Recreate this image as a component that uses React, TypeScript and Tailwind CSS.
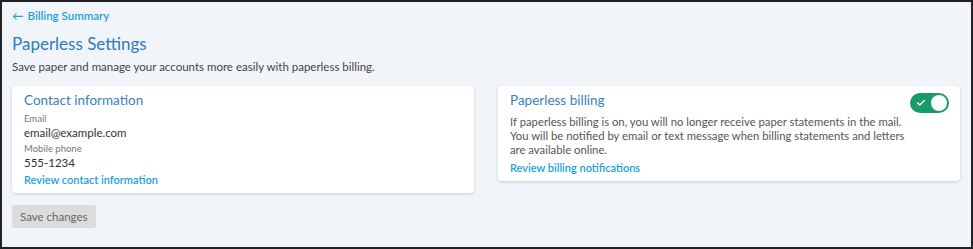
import { Check } from "lucide-react";

export default function App(): React.ReactElement {
  return (
    <div
      className="w-[973px] h-[249px] border-2 border-[#222] bg-[#f1f5f9] px-[10px] pt-[6px] overflow-hidden"
      style={{ fontFamily: '"Lato", "Open Sans", sans-serif' }}
    >
      <a className="flex items-center gap-1 text-[11.5px] text-[#1ba1dc] font-semibold leading-[16px]">
        <span>←</span> Billing Summary
      </a>
      <h1 className="mt-[9px] text-[17px] leading-[22px] text-[#2e7bbd]">
        Paperless Settings
      </h1>
      <p className="mt-[4px] text-[11.5px] leading-[16px] text-[#444]">
        Save paper and manage your accounts more easily with paperless billing.
      </p>

      <div className="mt-[11px] flex items-start gap-[24px]">
        <section className="w-[462px] bg-white rounded-[4px] shadow-[0_1px_3px_rgba(0,0,0,0.18)] px-[12px] pt-[4px] pb-[5px]">
          <h2 className="text-[13.5px] leading-[20px] text-[#3a7fc0]">
            Contact information
          </h2>
          <div className="mt-[3px] text-[9.5px] leading-[12px] text-[#777]">
            Email
          </div>
          <div className="text-[11.5px] leading-[15px] text-[#333]">
            email@example.com
          </div>
          <div className="mt-[3px] text-[9.5px] leading-[12px] text-[#777]">
            Mobile phone
          </div>
          <div className="text-[11.5px] leading-[15px] text-[#333]">555-1234</div>
          <a className="block mt-[2px] text-[11px] leading-[16px] font-semibold text-[#1ba1dc]">
            Review contact information
          </a>
        </section>

        <section className="w-[462px] bg-white rounded-[4px] shadow-[0_1px_3px_rgba(0,0,0,0.18)] pl-[12px] pr-[11px] pt-[4px] pb-[5px] flex items-start justify-between">
          <div>
            <h2 className="text-[13.5px] leading-[20px] text-[#3a7fc0]">
              Paperless billing
            </h2>
            <p className="mt-[5px] text-[11.3px] leading-[14px] text-[#555] w-[400px]">
              If paperless billing is on, you will no longer receive paper
              statements in the mail. You will be notified by email or text
              message when billing statements and letters are available online.
            </p>
            <a className="block mt-[3px] text-[11px] leading-[16px] font-semibold text-[#1ba1dc]">
              Review billing notifications
            </a>
          </div>
          <button className="mt-[3px] w-[42px] h-[20px] rounded-full bg-[#179c68] flex items-center justify-between pl-[6px] pr-[2px]">
            <Check className="w-[10px] h-[10px] text-white" strokeWidth={3.5} />
            <span className="w-[16px] h-[16px] rounded-full bg-white" />
          </button>
        </section>
      </div>

      <button className="block mt-[12px] h-[23px] px-[8px] rounded-[3px] bg-[#dcdcdc] text-[11.5px] text-[#666]">
        Save changes
      </button>
    </div>
  );
}
